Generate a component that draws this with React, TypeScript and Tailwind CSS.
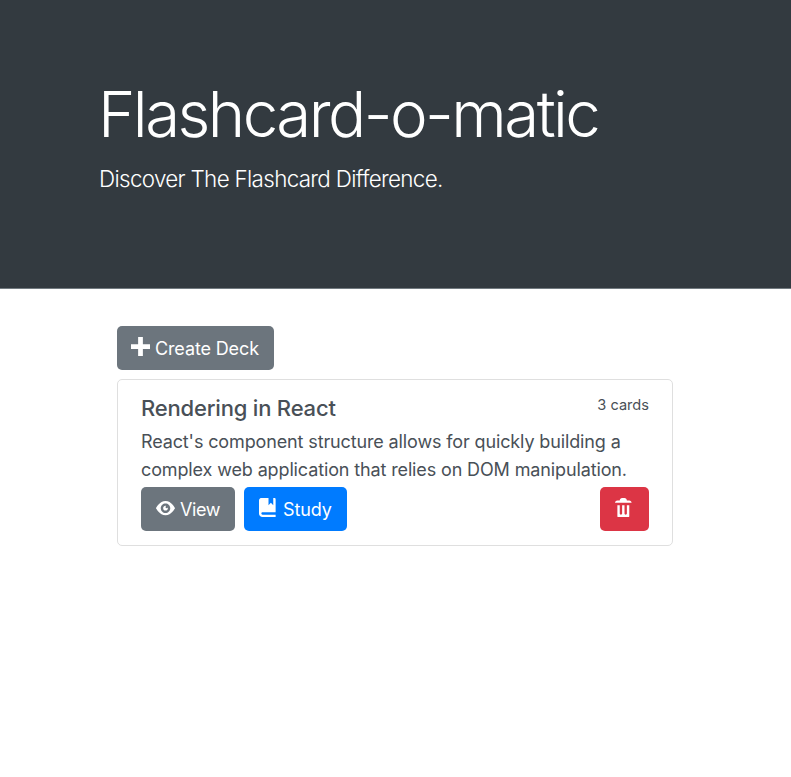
export default function App() {
  return (
    <div className="h-[777px] bg-white font-['Inter',sans-serif] text-[#495057]">
      <header className="h-[289px] border-b border-[#727a80] bg-[#333a40] pl-[98px] pt-[76px] text-white">
        <h1 className="text-[63.6px] leading-[76px] font-light tracking-[-2.55px] whitespace-nowrap">Flashcard-o-matic</h1>
        <p className="mt-[10px] pl-px text-[22.4px] leading-[34px] font-light tracking-[-0.67px] whitespace-nowrap">Discover The Flashcard Difference.</p>
      </header>
      <main className="ml-[117px] w-[556px] pt-[37px]">
        <button className="flex h-[44px] w-[157px] items-center rounded-[5px] bg-[#6c757d] pl-[14px] text-[18px] tracking-[-0.13px] text-white whitespace-nowrap">
          <svg className="mr-[5px] mb-[3px] size-[19px]" viewBox="0 0 8 8" fill="currentColor"><path d="M3 0v3H0v2h3v3h2V5h3V3H5V0H3z" /></svg>
          <span className="pt-px">Create Deck</span>
        </button>
        <section className="mt-[9px] h-[167px] rounded-[5px] border border-[#dfdfdf] px-[23px] pt-[14px]">
          <div className="flex justify-between">
            <h2 className="text-[22px] leading-[29px] font-medium tracking-[-0.19px]">Rendering in React</h2>
            <small className="text-[14.6px] leading-[23px]">3 cards</small>
          </div>
          <p className="mt-[5px] text-[18px] leading-[28px] tracking-[-0.13px] whitespace-nowrap">React's component structure allows for quickly building a<br />complex web application that relies on DOM manipulation.</p>
          <div className="mt-[3px] flex text-[18px] tracking-[-0.13px] text-white">
            <button className="flex h-[44px] w-[94px] items-center rounded-[5px] bg-[#6c757d] pl-[15px]">
              <svg className="mr-[5px] mt-[2px] size-[19px]" viewBox="0 0 8 8" fill="currentColor"><path d="M4.03 0C1.5 0 0 3 0 3s1.5 3 4.03 3C6.5 6 8 3 8 3S6.5 0 4.03 0zM4 1c1.11 0 2 .9 2 2 0 1.11-.89 2-2 2-1.1 0-2-.89-2-2 0-1.1.9-2 2-2zm0 1c-.55 0-1 .45-1 1s.45 1 1 1 1-.45 1-1c0-.1-.04-.19-.06-.28-.08.16-.24.28-.44.28-.28 0-.5-.22-.5-.5 0-.2.12-.36.28-.44C4.19 2.04 4.1 2 4 2z" /></svg>
              <span className="pt-px tracking-[-0.4px]">View</span>
            </button>
            <button className="ml-[9px] flex h-[44px] w-[103px] items-center rounded-[5px] bg-[#007bff] pl-[15px]">
              <svg className="mr-[5px] mb-[3px] size-[19px]" viewBox="0 0 8 8" fill="currentColor"><path d="M1 0C.93 0 .87.01.81.03.42.11.11.42.03.81.01.87 0 .93 0 1v5.5C0 7.33.67 8 1.5 8H7V7H1.5c-.28 0-.5-.22-.5-.5S1.22 6 1.5 6H7V.5c0-.28-.22-.5-.5-.5H6v3L5 2 4 3V0H1z" /></svg>
              <span className="pt-px">Study</span>
            </button>
            <button aria-label="Delete" className="ml-auto flex h-[44px] w-[49px] items-center rounded-[5px] bg-[#dc3545] pl-[15px]">
              <svg className="mb-[3px] size-[19px]" viewBox="0 0 8 8" fill="currentColor"><path d="M3 0c-.55 0-1 .45-1 1H1c-.55 0-1 .45-1 1h7c0-.55-.45-1-1-1H5c0-.55-.45-1-1-1H3zM1 3v4.81c0 .11.08.19.19.19h4.63c.11 0 .19-.08.19-.19V3H5v3.5c0 .28-.22.5-.5.5S4 6.78 4 6.5V3H3v3.5c0 .28-.22.5-.5.5S2 6.78 2 6.5V3H1z" /></svg>
            </button>
          </div>
        </section>
      </main>
    </div>
  );
}
